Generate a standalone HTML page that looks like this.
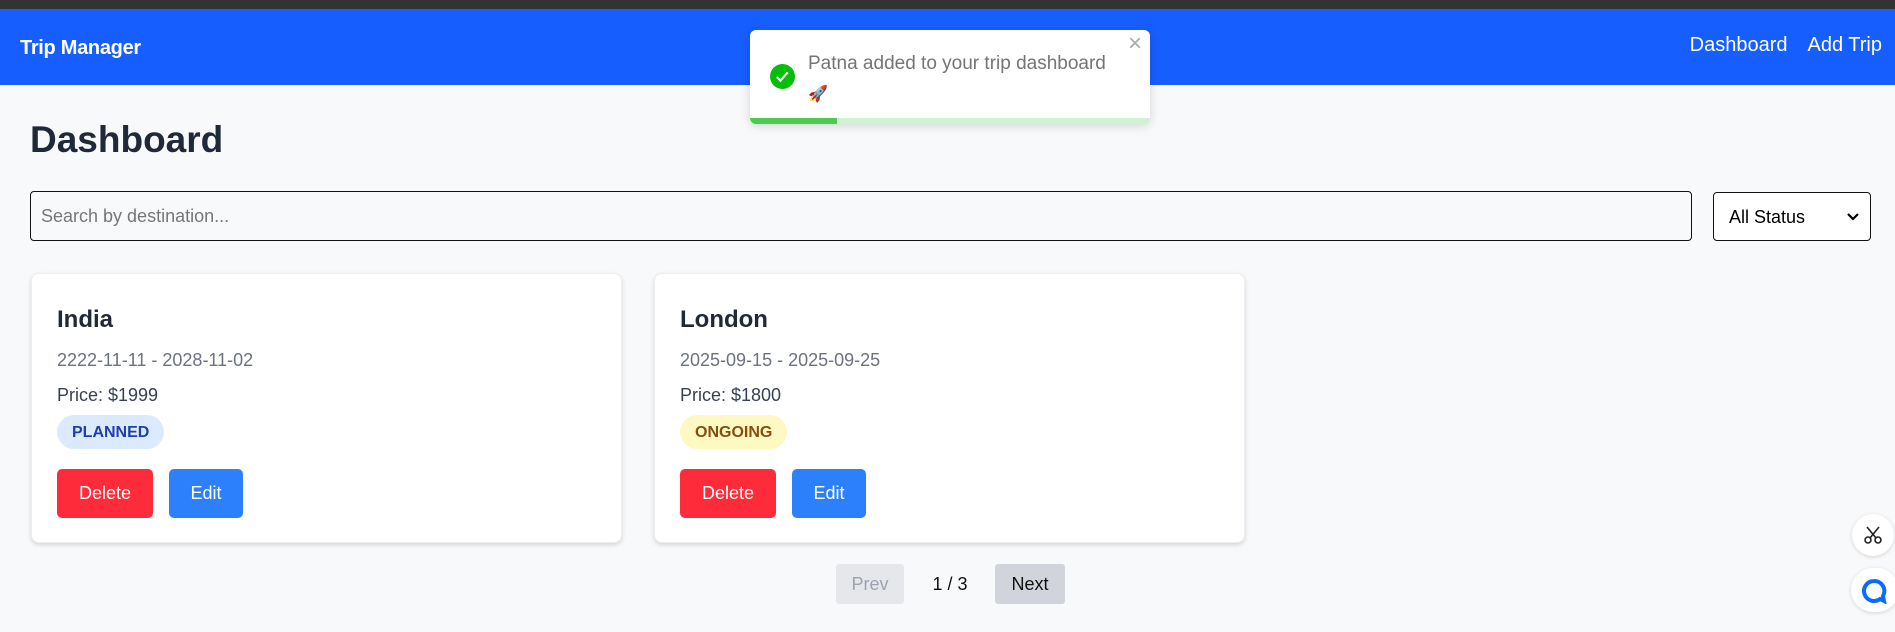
<!DOCTYPE html>
<html><head><meta charset="utf-8"><style>
*{box-sizing:border-box;margin:0;padding:0}
body{width:1895px;height:632px;overflow:hidden;background:#f8f9fb;font-family:"Liberation Sans",sans-serif;position:relative}
.top{position:absolute;left:0;top:0;width:1895px;height:9px;background:#333}
.nav{position:absolute;left:0;top:9px;width:1895px;height:76px;background:#175efe;color:#fff}
.brand{position:absolute;left:20px;top:28px;font-size:20px;font-weight:bold;letter-spacing:-0.3px}
.links{position:absolute;right:13px;top:25px;font-size:20px}
.links span{margin-left:20px}
h1{position:absolute;left:30px;top:119px;font-size:37px;font-weight:bold;color:#1f2937}
.search{position:absolute;left:30px;top:191px;width:1662px;height:50px;border:1px solid #111;border-radius:4px;background:#f8f9fb;font-size:18px;color:#777;padding:14px 10px}
.sel{position:absolute;left:1713px;top:192px;width:158px;height:49px;border:1px solid #111;border-radius:4px;background:#fff;font-size:18px;color:#000;padding:14px 15px}
.sel svg{position:absolute;right:10px;top:19px}
.card{position:absolute;top:273px;width:591px;height:270px;background:#fff;border-radius:8px;box-shadow:0 2px 5px rgba(0,0,0,.15);border:1px solid #eceef1}
.card h2{position:absolute;left:25px;top:32px;font-size:24px;font-weight:600;color:#1f2937}
.date{position:absolute;left:25px;top:76px;font-size:18px;color:#6b7280}
.price{position:absolute;left:25px;top:111px;font-size:18px;color:#374151}
.badge{position:absolute;left:25px;top:141px;height:34px;border-radius:17px;font-size:16px;font-weight:bold;padding:9px 15px}
.btn{position:absolute;top:195px;height:49px;border-radius:5px;color:#fff;font-size:18px;padding:14px 0;text-align:center}
.toast{position:absolute;left:750px;top:30px;width:400px;height:94px;background:#fff;border-radius:6px;box-shadow:0 2px 10px rgba(0,0,0,.15);overflow:hidden}
.pg{position:absolute;top:564px;height:40px;border-radius:3px;font-size:18px;padding:10px 0;text-align:center}
.fab{position:absolute;background:#fff;border-radius:50%;box-shadow:0 1px 4px rgba(0,0,0,.15)}
</style></head><body>
<div class="top"></div>
<div class="nav"><div class="brand">Trip Manager</div><div class="links"><span>Dashboard</span><span>Add Trip</span></div></div>
<div class="toast">
 <svg style="position:absolute;left:20px;top:34px" width="25" height="25" viewBox="0 0 24 24"><circle cx="12" cy="12" r="12" fill="#07bc0c"/><path d="M6.5 12.5l3.5 3.5 7-8" stroke="#fff" stroke-width="2" fill="none"/></svg>
 <div style="position:absolute;left:58px;top:19px;font-size:19px;color:#757575;line-height:30px">Patna added to your trip dashboard<br><span style="font-size:16px">🚀</span></div>
 <div style="position:absolute;right:8px;top:0px;color:#aaa;font-size:24px">×</div>
 <div style="position:absolute;left:0;bottom:0;width:400px;height:6px;background:#cff3d0"></div>
 <div style="position:absolute;left:0;bottom:0;width:87px;height:6px;background:#4bcc4c"></div>
</div>
<h1>Dashboard</h1>
<div class="search">Search by destination...</div>
<div class="sel">All Status<svg width="14" height="10" viewBox="0 0 14 10"><path d="M2 2l5 5 5-5" stroke="#000" stroke-width="2.2" fill="none"/></svg></div>
<div class="card" style="left:31px"><h2>India</h2><div class="date">2222-11-11 - 2028-11-02</div><div class="price">Price: $1999</div>
<div class="badge" style="background:#dbeafe;color:#1e40af">PLANNED</div>
<div class="btn" style="left:25px;width:96px;background:#fe2c3a">Delete</div><div class="btn" style="left:137px;width:74px;background:#2d80fb">Edit</div></div>
<div class="card" style="left:654px"><h2>London</h2><div class="date">2025-09-15 - 2025-09-25</div><div class="price">Price: $1800</div>
<div class="badge" style="background:#fef9c3;color:#854d0e">ONGOING</div>
<div class="btn" style="left:25px;width:96px;background:#fe2c3a">Delete</div><div class="btn" style="left:137px;width:74px;background:#2d80fb">Edit</div></div>
<div class="pg" style="left:836px;width:68px;background:#e5e7eb;color:#9ca3af">Prev</div>
<div class="pg" style="left:925px;width:50px;color:#111">1 / 3</div>
<div class="pg" style="left:995px;width:70px;background:#d1d5db;color:#111">Next</div>
<div class="fab" style="left:1852px;top:514px;width:42px;height:42px"><svg style="position:absolute;left:11px;top:11px" width="20" height="20" viewBox="0 0 20 20"><circle cx="5" cy="15" r="3" stroke="#222" stroke-width="1.6" fill="none"/><circle cx="15" cy="15" r="3" stroke="#222" stroke-width="1.6" fill="none"/><path d="M7 13L16 2M13 13L4 2" stroke="#222" stroke-width="1.6"/></svg></div>
<div class="fab" style="left:1851px;top:568px;width:48px;height:44px;border-radius:22px"><svg style="position:absolute;left:10px;top:10px" width="26" height="26" viewBox="0 0 26 26"><path d="M13 3a10 10 0 1 0 6 18l4 2-1-5A10 10 0 0 0 13 3z" fill="none" stroke="#0a6cff" stroke-width="4"/></svg></div>
</body></html>
